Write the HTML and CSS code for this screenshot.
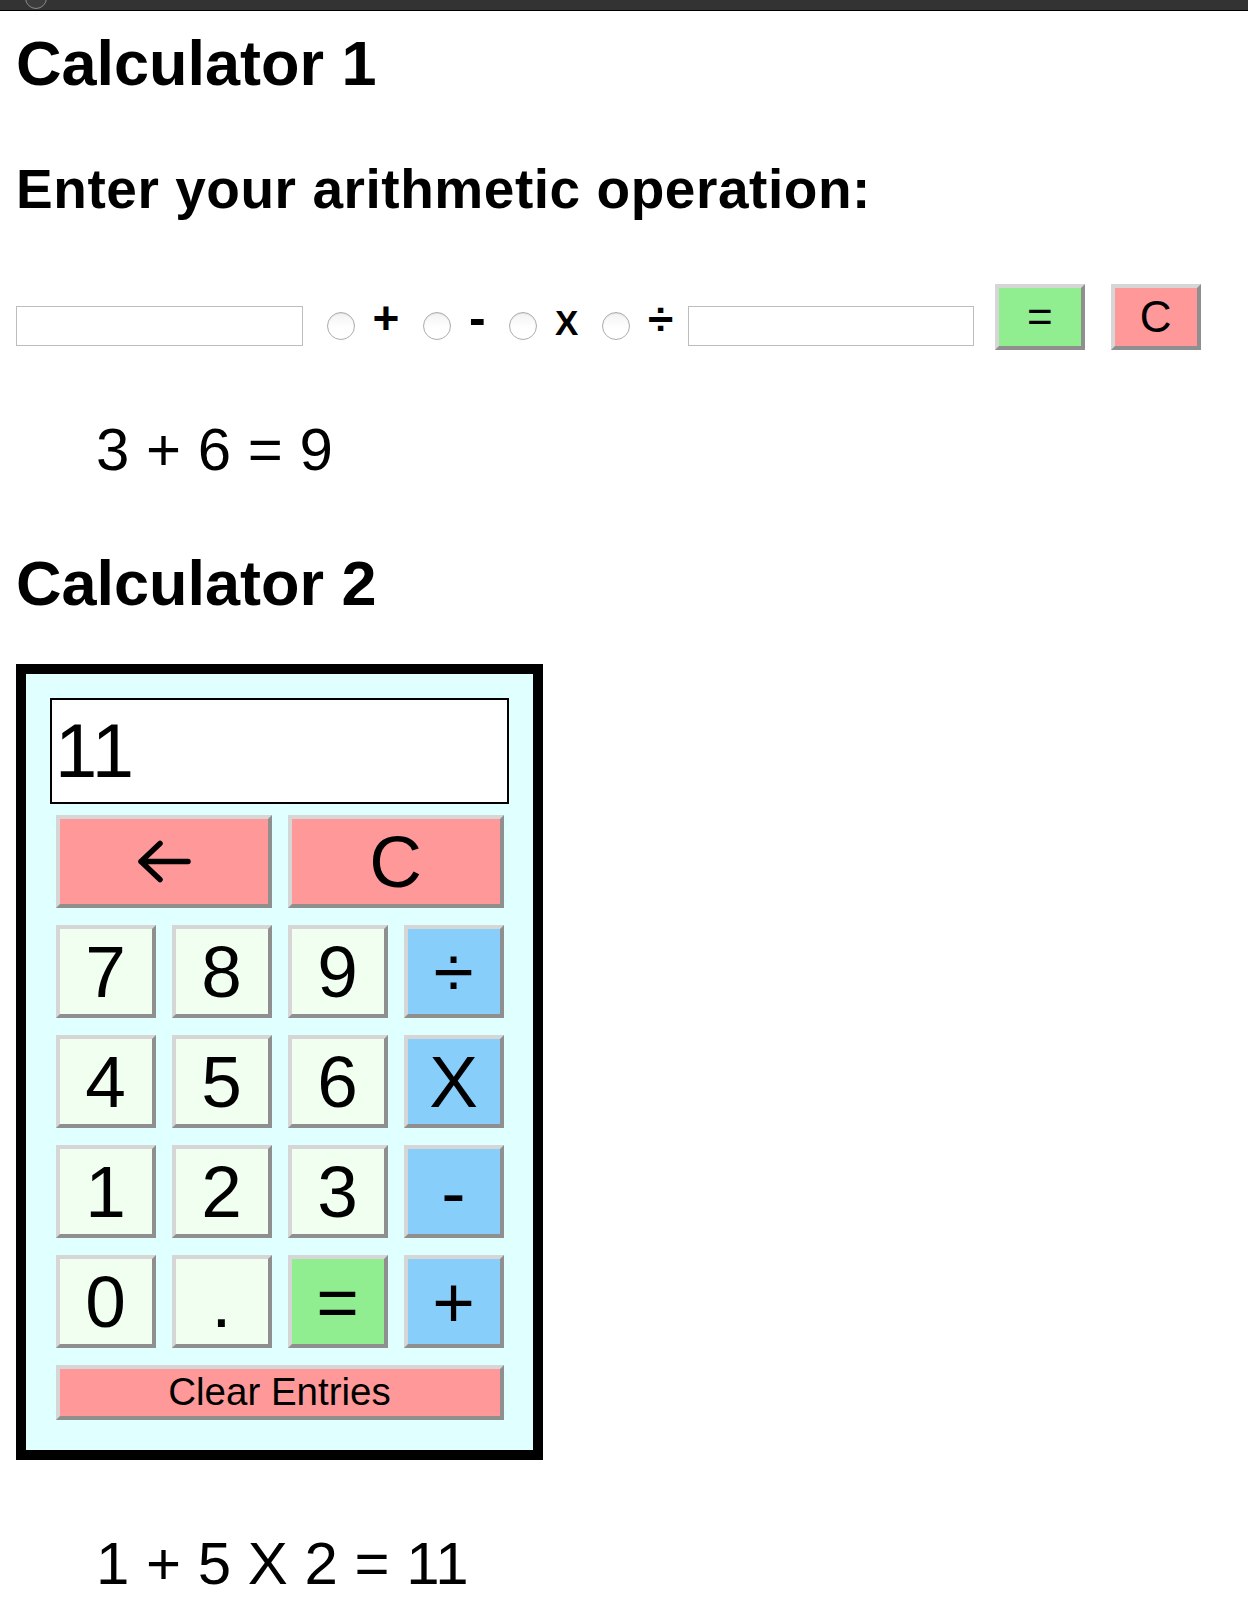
FILE: index.html
```html
<!DOCTYPE html>
<html lang="en">
<head>
<meta charset="utf-8">
<title>Calculators</title>
<link rel="stylesheet" href="styles.css">
</head>
<body>
<div class="topbar"><span class="topbar-dot"></span></div>
<main class="page">
  <h1 class="title">Calculator 1</h1>
  <h2 class="prompt">Enter your arithmetic operation:</h2>
  <form class="row">
    <input class="num" type="text">
    <label class="opt"><input class="radio" type="radio" name="op"><span class="sym sym-plus">+</span></label>
    <label class="opt"><input class="radio" type="radio" name="op"><span class="sym sym-minus">-</span></label>
    <label class="opt"><input class="radio" type="radio" name="op"><span class="sym sym-times">X</span></label>
    <label class="opt"><input class="radio" type="radio" name="op"><span class="sym sym-div">÷</span></label>
    <input class="num num-2" type="text">
    <button class="btn btn-eq" type="button">=</button>
    <button class="btn btn-clr" type="button">C</button>
  </form>
  <p class="result">3 + 6 = 9</p>

  <h1 class="title title-2">Calculator 2</h1>
  <div class="calc">
    <input class="display" type="text" value="11">
    <div class="keys">
      <button class="key key-wide key-red" type="button" aria-label="Backspace">
        <svg class="arrow" width="54" height="43" viewBox="0 0 54 43"><path d="M51 21.5H4M23 3.5L4 21.5L23 39.5" fill="none" stroke="#000" stroke-width="5.5" stroke-linecap="round" stroke-linejoin="round"/></svg>
      </button>
      <button class="key key-wide key-red" type="button">C</button>
      <button class="key" type="button">7</button>
      <button class="key" type="button">8</button>
      <button class="key" type="button">9</button>
      <button class="key key-op" type="button">÷</button>
      <button class="key" type="button">4</button>
      <button class="key" type="button">5</button>
      <button class="key" type="button">6</button>
      <button class="key key-op" type="button">X</button>
      <button class="key" type="button">1</button>
      <button class="key" type="button">2</button>
      <button class="key" type="button">3</button>
      <button class="key key-op" type="button">-</button>
      <button class="key" type="button">0</button>
      <button class="key" type="button">.</button>
      <button class="key key-eq" type="button">=</button>
      <button class="key key-op" type="button">+</button>
      <button class="key key-clear key-red" type="button">Clear Entries</button>
    </div>
  </div>
  <p class="result result-2">1 + 5 X 2 = 11</p>
</main>
</body>
</html>
```
FILE: styles.css
```css
html, body {
  margin: 0;
  background: #fff;
}

body {
  font-family: "Liberation Sans", Arial, sans-serif;
  color: #000;
}

.topbar {
  position: relative;
  height: 10px;
  background: #333;
  border-bottom: 1px solid #000;
  overflow: hidden;
}

.topbar-dot {
  position: absolute;
  left: 25px;
  top: -13px;
  width: 20px;
  height: 20px;
  border-radius: 50%;
  border: 1px solid #8a8a8a;
  background: #3c3c3c;
}

.page {
  padding: 0 16px;
}

.title {
  font-size: 63px;
  line-height: 63px;
  font-weight: bold;
  margin: 20.7px 0 0;
}

.title-2 {
  margin-top: 71.5px;
}

.prompt {
  font-size: 55px;
  line-height: 55px;
  font-weight: bold;
  letter-spacing: 0.55px;
  margin: 67px 0 0;
}

.row {
  display: flex;
  align-items: flex-start;
  height: 66px;
  margin: 67.3px 0 0;
}

.num {
  box-sizing: border-box;
  width: 287px;
  height: 40px;
  margin: 22px 0 0;
  padding: 0 4px;
  border: 1px solid #bdbdbd;
  font: 20px "Liberation Sans", Arial, sans-serif;
  background: #fff;
}

.num-2 {
  width: 286px;
  margin-left: 15px;
}

.opt {
  display: flex;
  align-items: flex-start;
}

.radio {
  -webkit-appearance: none;
  appearance: none;
  box-sizing: border-box;
  width: 28px;
  height: 28px;
  margin: 28px 0 0 23.5px;
  border-radius: 50%;
  border: 1px solid #adadad;
  background: linear-gradient(#f3f3f3, #fff 60%);
  box-shadow: inset 0 1px 1px rgba(0, 0, 0, 0.08);
}

.sym {
  display: block;
  font-weight: bold;
  margin-left: 18px;
}

.sym-plus {
  font-size: 46px;
  line-height: 46px;
  margin-top: 10.7px;
}

.sym-minus {
  font-size: 50px;
  line-height: 50px;
  margin-top: 9.5px;
}

.sym-times {
  font-size: 35px;
  line-height: 35px;
  margin-top: 21.4px;
}

.sym-div {
  font-size: 46px;
  line-height: 46px;
  margin-top: 11.7px;
}

.btn {
  box-sizing: border-box;
  width: 90px;
  height: 66px;
  margin: 0;
  padding: 0;
  border: 4px solid;
  border-color: #d6d6d6 #8f8f8f #8f8f8f #d6d6d6;
  font: 44px/1 "Liberation Sans", Arial, sans-serif;
  color: #000;
}

.btn-eq {
  margin-left: 20.6px;
  background: #90ee90;
}

.btn-clr {
  margin-left: 26px;
  background: #ff9999;
}

.result {
  font-size: 60px;
  line-height: 60px;
  margin: 70.2px 0 0 80px;
}

.result-2 {
  margin-top: 74.2px;
}

.calc {
  width: 459px;
  margin-top: 49px;
  padding: 24px 24px 30px;
  border: 10px solid #000;
  background: #e0ffff;
}

.display {
  box-sizing: border-box;
  display: block;
  width: 459px;
  height: 106px;
  margin: 0;
  padding: 0 3px;
  border: 2px solid #000;
  background: #fff;
  font: 76px "Liberation Sans", Arial, sans-serif;
  color: #000;
  outline: none;
}

.keys {
  display: grid;
  grid-template-columns: repeat(4, 100px);
  grid-template-rows: repeat(5, 93px) 55px;
  gap: 17px 16px;
  width: 448px;
  margin: 11px auto 0;
}

.key {
  box-sizing: border-box;
  display: flex;
  align-items: center;
  justify-content: center;
  margin: 0;
  padding: 0;
  border: 4px solid;
  border-color: #d6d6d6 #8f8f8f #8f8f8f #d6d6d6;
  background: #f0fff0;
  font: 73px/1 "Liberation Sans", Arial, sans-serif;
  color: #000;
}

.key-wide {
  grid-column: span 2;
}

.key-op {
  background: #87cefa;
}

.key-eq {
  background: #90ee90;
}

.key-red {
  background: #ff9999;
}

.key-clear {
  grid-column: 1 / -1;
  font-size: 38.5px;
}

.arrow {
  display: block;
}
```
